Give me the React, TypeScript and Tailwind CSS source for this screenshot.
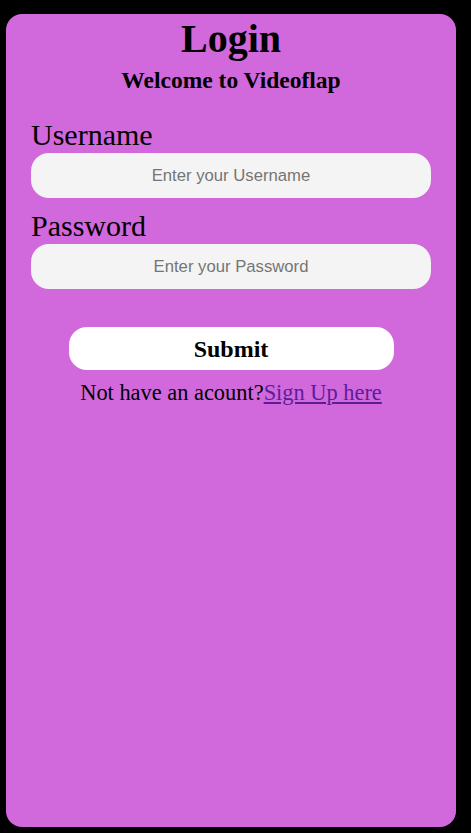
export default function App() {
  return (
    <div className="min-h-[833px] bg-black pl-[6px] pr-[15px] pt-[14px] pb-[6px]" style={{ fontFamily: '"Liberation Serif", serif' }}>
      <div className="h-[813px] w-[450px] rounded-[16px] bg-[#d168dc] px-[25px] text-black">
        <h1 className="text-center text-[40px] font-bold leading-[50px]">Login</h1>
        <h2 className="mt-[2px] text-center text-[23.5px] font-bold leading-[28px]">Welcome to Videoflap</h2>

        <form className="mt-[23px] flex flex-col" onSubmit={(e) => e.preventDefault()}>
          <label className="text-[30px] leading-[36px]">Username</label>
          <input
            type="text"
            placeholder="Enter your Username"
            className="h-[45px] w-[400px] rounded-[18px] bg-[#f4f4f4] text-center text-[16.7px] outline-none placeholder:text-[#757575]"
            style={{ fontFamily: '"Liberation Sans", Arial, sans-serif' }}
          />

          <label className="mt-[10px] text-[30px] leading-[36px]">Password</label>
          <input
            type="password"
            placeholder="Enter your Password"
            className="h-[45px] w-[400px] rounded-[18px] bg-[#f4f4f4] text-center text-[16.7px] outline-none placeholder:text-[#757575]"
            style={{ fontFamily: '"Liberation Sans", Arial, sans-serif' }}
          />

          <button
            type="submit"
            className="mx-auto mt-[38px] h-[43px] w-[325px] rounded-[18px] bg-white text-[24px] font-bold"
          >
            Submit
          </button>
        </form>

        <p className="mt-[8px] text-center text-[22.4px] leading-[30px]">
          Not have an acount?<a href="#" className="text-[#5c1d99] underline">Sign Up here</a>
        </p>
      </div>
    </div>
  );
}
